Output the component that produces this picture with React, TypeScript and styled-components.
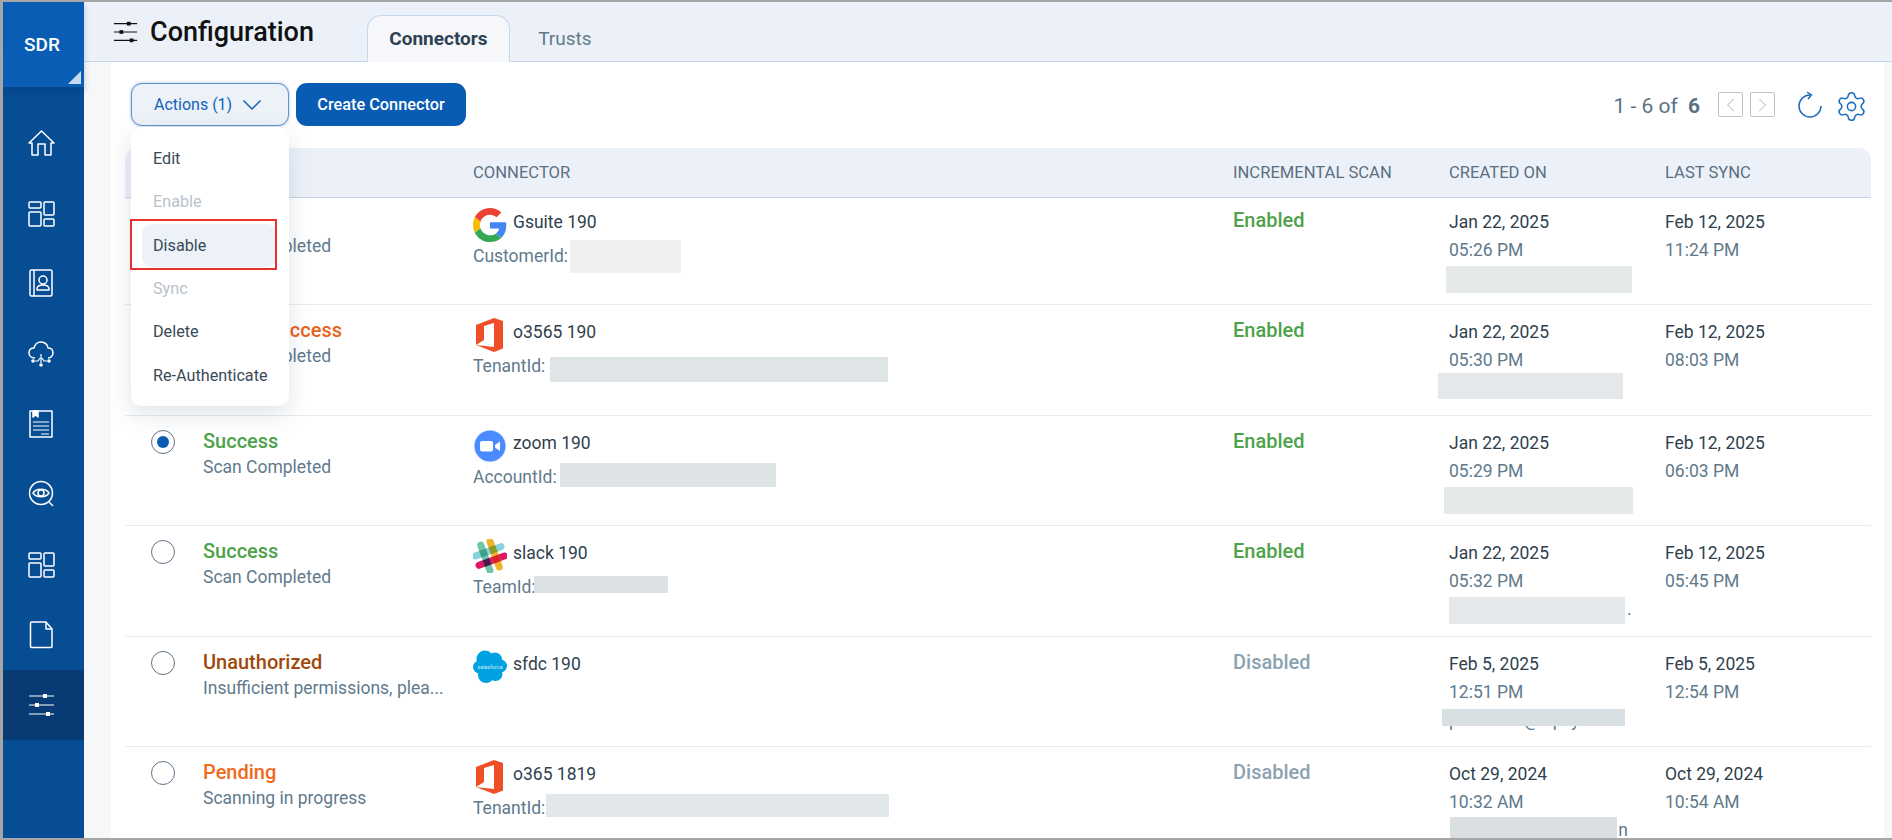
import React from 'react';
import styled, { createGlobalStyle } from 'styled-components';
import { Settings, ChevronLeft, ChevronRight } from 'lucide-react';

const Global = createGlobalStyle`
  html, body { margin: 0; padding: 0; background: #fff; }
  body { font-family: Roboto, "Liberation Sans", sans-serif; color: #2c3e50; }
  * { box-sizing: border-box; }
`;

const COLUMNS = '78px 270px 760px 216px 216px 1fr';

const Frame = styled.div`
  width: 1892px;
  height: 840px;
  display: flex;
  overflow: hidden;
  border-top: 2px solid #a6a6a6;
  border-left: 3px solid #a6a6a6;
  border-bottom: 2px solid #a6a6a6;
`;

const Sidebar = styled.nav`
  width: 81px;
  flex: none;
  background: #064d94;
  display: flex;
  flex-direction: column;
`;

const Brand = styled.div`
  height: 85px;
  flex: none;
  position: relative;
  background: linear-gradient(#085cb4, #0a5eb6);
  color: #fff;
  font-size: 19px;
  font-weight: 500;
  display: flex;
  justify-content: center;
  padding: 30px 3px 0 0;
  line-height: 26px;
  box-shadow: 0 4px 6px rgba(4, 50, 100, 0.25);

  &::after {
    content: '';
    position: absolute;
    right: 3px;
    bottom: 3px;
    border-style: solid;
    border-width: 0 0 13px 13px;
    border-color: transparent transparent #c7daee transparent;
  }
`;

const NavList = styled.div`
  padding-top: 20.5px;
  display: flex;
  flex-direction: column;
`;

const NavItem = styled.div<{ $active?: boolean }>`
  height: 70.3px;
  padding-left: 25px;
  display: flex;
  align-items: center;
  background: ${(p) => (p.$active ? '#083a74' : 'transparent')};
`;

const NavIcon = styled.svg`
  width: 28px;
  height: 28px;
  fill: none;
  stroke: #fff;
  stroke-width: 1.5;
  stroke-linejoin: round;
`;

const Content = styled.div`
  flex: 1;
  min-width: 0;
  display: flex;
  flex-direction: column;
`;

const Header = styled.header`
  height: 60px;
  flex: none;
  background: #ecf1f9;
  border-bottom: 1px solid #c5d5e8;
  display: flex;
  padding-left: 29px;
`;

const TitleGroup = styled.div`
  display: flex;
  gap: 11px;
  padding-top: 15px;
  margin-right: 53px;
`;

const TitleIcon = styled.svg`
  width: 26px;
  height: 28px;
  margin-top: 1px;
  fill: none;
  stroke: #111;
  stroke-width: 1.5;
`;

const Title = styled.h1`
  margin: 0;
  font-size: 27px;
  font-weight: 500;
  line-height: 30px;
  color: #111;
`;

const Tabs = styled.div`
  display: flex;
  align-items: flex-end;
  padding-top: 13px;
`;

const Tab = styled.div<{ $active?: boolean }>`
  height: ${(p) => (p.$active ? '47px' : '46px')};
  width: ${(p) => (p.$active ? '143px' : '110px')};
  margin-bottom: -1px;
  padding-top: 12px;
  text-align: center;
  font-size: 19px;
  line-height: 22px;
  font-weight: ${(p) => (p.$active ? 700 : 400)};
  color: ${(p) => (p.$active ? '#2f4152' : '#64798c')};
  background: ${(p) => (p.$active ? '#f5f7fb' : 'transparent')};
  border: ${(p) => (p.$active ? '1px solid #c5d9ec' : 'none')};
  border-bottom: ${(p) => (p.$active ? 'none' : '1px solid #c5d5e8')};
  border-radius: 14px 14px 0 0;
`;

const Workspace = styled.div`
  flex: 1;
  min-height: 0;
  background: #f6f7f8;
  padding: 0 8px 0 27px;
  display: flex;
`;

const Panel = styled.main`
  flex: 1;
  min-width: 0;
  background: #fff;
  padding: 21px 13px 0 14px;
`;

const Toolbar = styled.div`
  height: 43px;
  margin-bottom: 22px;
  padding: 0 6px;
  display: flex;
  align-items: center;
  justify-content: space-between;
`;

const ToolbarLeft = styled.div`
  display: flex;
  gap: 7px;
`;

const ActionsWrap = styled.div`
  position: relative;
`;

const ActionsButton = styled.button`
  width: 158px;
  height: 43px;
  padding: 0 0 0 22px;
  display: flex;
  align-items: center;
  gap: 10px;
  font: 400 16px Roboto, sans-serif;
  color: #1262b8;
  background: #edf2f9;
  border: 1px solid #5f94cc;
  border-radius: 11px;
  box-shadow: 0 0 3px rgba(30, 100, 180, 0.45);
`;

const ActionsChevron = styled.svg`
  width: 20px;
  height: 12px;
  fill: none;
  stroke: #1262b8;
  stroke-width: 1.5;
`;

const CreateButton = styled.button`
  width: 170px;
  height: 43px;
  font: 500 16.3px Roboto, sans-serif;
  color: #fff;
  background: #085cb4;
  border: none;
  border-radius: 11px;
`;

const Menu = styled.div`
  position: absolute;
  z-index: 5;
  top: 44px;
  left: 0;
  width: 158px;
  height: 279px;
  padding-top: 10px;
  background: #fff;
  border-radius: 10px;
  box-shadow: 0 8px 24px rgba(60, 80, 110, 0.16);
`;

const MenuItem = styled.div<{ $disabled?: boolean; $hover?: boolean }>`
  height: 43.3px;
  margin: 0 12px 0 11px;
  padding-left: 11px;
  display: flex;
  align-items: center;
  font-size: 16.2px;
  white-space: nowrap;
  color: ${(p) => (p.$disabled ? '#b8c2ca' : '#3a4a58')};
  background: ${(p) => (p.$hover ? '#edf2f9' : 'transparent')};
  border-radius: 10px;
`;

const Highlight = styled.div`
  position: absolute;
  top: 92px;
  left: -1px;
  width: 147px;
  height: 51px;
  border: 2px solid #e8302c;
`;

const ToolbarRight = styled.div`
  display: flex;
  align-items: center;
  margin: 3px -3px 0 0;
`;

const Count = styled.div`
  font-size: 21px;
  color: #5b7083;
  margin-right: 18px;
  white-space: nowrap;

  b {
    font-weight: 700;
    margin-left: 5px;
  }
`;

const PageButton = styled.div`
  width: 25px;
  height: 25px;
  margin: -3px 7px 0 0;
  border: 1px solid #b9c3cc;
  border-radius: 2px;
  display: flex;
  align-items: center;
  justify-content: center;
  color: #a3b0bb;
`;

const RefreshIcon = styled.svg`
  width: 26px;
  height: 28px;
  margin: -2px 12px 0 15px;
  fill: none;
  stroke: #1a6cc0;
  stroke-width: 1.5;
`;

const TableHead = styled.div`
  height: 50px;
  display: grid;
  grid-template-columns: ${COLUMNS};
  align-items: center;
  background: #ecf1f9;
  border-bottom: 1px solid #c5d4e6;
  border-radius: 12px 12px 0 0;
`;

const HeadCell = styled.div`
  font-size: 16.6px;
  color: #5b6f80;
  white-space: nowrap;
`;

const Row = styled.div<{ $first?: boolean }>`
  height: ${(p) => (p.$first ? '107px' : '110.5px')};
  padding-top: ${(p) => (p.$first ? '10px' : '13px')};
  display: grid;
  grid-template-columns: ${COLUMNS};
  align-items: start;
  border-bottom: 1px solid #e8ecef;
`;

const RadioCell = styled.div`
  padding: 1px 0 0 26px;
`;

const Radio = styled.span<{ $checked?: boolean }>`
  width: 24px;
  height: 24px;
  display: flex;
  align-items: center;
  justify-content: center;
  border: 1.5px solid #5e7388;
  border-radius: 50%;

  &::after {
    content: '';
    width: 12px;
    height: 12px;
    border-radius: 50%;
    background: ${(p) => (p.$checked ? '#0b5cb5' : 'transparent')};
  }
`;

const StatusTitle = styled.div<{ $color: string }>`
  font-size: 20px;
  font-weight: 500;
  line-height: 24px;
  color: ${(p) => p.$color};
  white-space: nowrap;
`;

const StatusText = styled.div`
  font-size: 17.5px;
  line-height: 28px;
  color: #5f7a8d;
  white-space: nowrap;
`;

const ConnectorName = styled.div`
  height: 34px;
  display: flex;
  align-items: flex-start;
  gap: 6px;
  font-size: 17.5px;
  line-height: 28px;
  color: #2f3f4e;
`;

const Logo = styled.svg`
  width: 34px;
  height: 34px;
  flex: none;
`;

const IdLine = styled.div`
  position: relative;
  height: 28px;
  font-size: 17.5px;
  line-height: 28px;
  color: #5f7a8d;
  white-space: pre;
`;

const Redact = styled.div<{ $x: number; $y: number; $w: number; $h: number; $shade: string }>`
  position: absolute;
  left: ${(p) => p.$x}px;
  top: ${(p) => p.$y}px;
  width: ${(p) => p.$w}px;
  height: ${(p) => p.$h}px;
  background: ${(p) => p.$shade};
`;

const ScanState = styled.div<{ $on: boolean }>`
  font-size: 20px;
  font-weight: 500;
  line-height: 24px;
  color: ${(p) => (p.$on ? '#4ea24a' : '#8ba2b0')};
`;

const DateText = styled.div`
  font-size: 17.5px;
  line-height: 28px;
  color: #2f3f4e;
`;

const TimeText = styled.div`
  font-size: 17.5px;
  line-height: 28px;
  color: #5f7a8d;
`;

const EmailLine = styled.div`
  position: relative;
  height: 28px;
  font-size: 17.5px;
  line-height: 28px;
  color: #5f7a8d;
  white-space: pre;
`;

type Box = { x: number; y: number; w: number; h: number; shade: string };

const SidebarGrid = () => (
  <NavIcon viewBox="0 0 28 28">
    <rect x="1" y="3" width="12" height="6" rx="1" />
    <rect x="1" y="13" width="12" height="14" rx="1" />
    <rect x="16" y="3" width="10" height="13" rx="1" />
    <rect x="16" y="20" width="10" height="7" rx="1" />
  </NavIcon>
);

const Sliders = () => (
  <>
    <path d="M1 5H26M1 14H26M1 23H26" strokeWidth="1.2" />
    <rect x="15" y="3" width="4" height="4" fill="currentColor" stroke="none" />
    <rect x="7" y="12" width="4" height="4" fill="currentColor" stroke="none" />
    <rect x="18" y="21" width="4" height="4" fill="currentColor" stroke="none" />
  </>
);

const navIcons = [
  <NavIcon viewBox="0 0 28 28" key="home">
    <path d="M1 14L13.5 2L26 14H23V26H17V15H10V26H4V14Z" />
  </NavIcon>,
  <SidebarGrid key="grid" />,
  <NavIcon viewBox="0 0 28 28" key="book">
    <rect x="2" y="1" width="22" height="26" rx="1.5" />
    <path d="M6 1V27" />
    <circle cx="15" cy="11" r="4" />
    <path d="M9 21V20C9 17 12 16 15 16S21 17 21 20V21Z" />
  </NavIcon>,
  <NavIcon viewBox="0 0 28 28" key="cloud">
    <path d="M7 18C3 18 1 15.5 1 13C1 10 3 8 6 8C7 4 10 2 13 2C17 2 20 5 20 8C23 8 25 10 25 13C25 15.5 23 18 20 18" />
    <path d="M13 14V23M7 21H10L12 18M19 21H16L14 18" strokeWidth="1.2" />
    <circle cx="13" cy="25" r="1.8" fill="#fff" stroke="none" />
    <circle cx="5" cy="21" r="1.8" fill="#fff" stroke="none" />
    <circle cx="21" cy="21" r="1.8" fill="#fff" stroke="none" />
  </NavIcon>,
  <NavIcon viewBox="0 0 28 28" key="doc">
    <rect x="2" y="1" width="22" height="26" />
    <path d="M5 1H10V7L7.5 5L5 7Z" fill="#fff" />
    <path d="M5 12H21M5 16H21M5 20H21M13 24H21" strokeWidth="1.2" />
  </NavIcon>,
  <NavIcon viewBox="0 0 28 28" key="eye">
    <circle cx="13" cy="13" r="11.5" />
    <path d="M21 22L25 26" />
    <path d="M5 13C8 8 18 8 21 13C18 18 8 18 5 13Z" />
    <circle cx="13" cy="13" r="3" />
  </NavIcon>,
  <SidebarGrid key="grid2" />,
  <NavIcon viewBox="0 0 28 28" key="file">
    <path d="M3.5 1H18L24 8V25.5A1 1 0 0 1 23 26.5H3.5A1 1 0 0 1 2.500 25.500V2A1 1 0 0 1 3.500 1Z" />
    <path d="M18 1V8H24" />
  </NavIcon>,
  <NavIcon viewBox="0 0 28 28" color="#fff" key="sliders">
    <Sliders />
  </NavIcon>,
];

const GoogleLogo = () => (
  <Logo viewBox="0 0 48 48">
    <path fill="#EA4335" d="M24 9.500c3.540 0 6.710 1.220 9.210 3.600l6.850-6.850C35.900 2.380 30.470 0 24 0 14.620 0 6.510 5.380 2.560 13.220l7.980 6.190C12.430 13.720 17.740 9.500 24 9.500z" />
    <path fill="#4285F4" d="M46.980 24.550c0-1.570-.15-3.090-.38-4.550H24v9.020h12.940c-.58 2.960-2.260 5.480-4.780 7.180l7.730 6c4.510-4.180 7.090-10.360 7.090-17.650z" />
    <path fill="#FBBC05" d="M10.530 28.590c-.48-1.450-.76-2.990-.76-4.590s.27-3.140.76-4.590l-7.980-6.190C.92 16.460 0 20.120 0 24c0 3.880.92 7.54 2.560 10.780l7.970-6.190z" />
    <path fill="#34A853" d="M24 48c6.480 0 11.930-2.130 15.890-5.810l-7.730-6c-2.150 1.450-4.920 2.300-8.160 2.300-6.260 0-11.570-4.220-13.470-9.910l-7.980 6.190C6.510 42.620 14.620 48 24 48z" />
  </Logo>
);

const OfficeLogo = () => (
  <Logo viewBox="0 0 34 34">
    <path fill="#f04e26" d="M3 7L21 0L30 3V30.500L21 34L3 27Z" />
    <path fill="#fff" d="M21 5L11 8V22L3 27L21 29Z" />
  </Logo>
);

const ZoomLogo = () => (
  <Logo viewBox="0 0 34 34">
    <circle cx="17" cy="17" r="16.500" fill="#edf2fb" />
    <circle cx="17" cy="17" r="15.500" fill="#4a8cff" />
    <rect x="7" y="12" width="13" height="10.500" rx="2" fill="#fff" />
    <path d="M22 16L27 12.500V22L22 18.500Z" fill="#fff" />
  </Logo>
);

const SlackLogo = () => (
  <Logo viewBox="0 0 34 34">
    <g transform="rotate(-20 17 17)">
      <rect x="0" y="8.500" width="34" height="7" rx="3.500" fill="#89d3df" />
      <rect x="0" y="18.500" width="34" height="7" rx="3.500" fill="#e01765" />
      <rect x="8.500" y="0" width="7" height="34" rx="3.500" fill="#70c6a8" />
      <rect x="18.500" y="0" width="7" height="34" rx="3.500" fill="#ecb32e" />
      <rect x="8.500" y="8.500" width="7" height="7" fill="#3f9e8a" />
      <rect x="18.500" y="8.500" width="7" height="7" fill="#8a9a2a" />
      <rect x="8.500" y="18.500" width="7" height="7" fill="#4d1a48" />
      <rect x="18.500" y="18.500" width="7" height="7" fill="#dd1f26" />
    </g>
  </Logo>
);

const SalesforceLogo = () => (
  <Logo viewBox="0 0 34 34">
    <g fill="#00a1e0">
      <circle cx="12" cy="9" r="8.500" />
      <circle cx="22" cy="9.500" r="7" />
      <circle cx="27.500" cy="16" r="6.500" />
      <circle cx="6.500" cy="17" r="6.500" />
      <circle cx="13" cy="25" r="8" />
      <circle cx="22.500" cy="24" r="7" />
      <rect x="8" y="9" width="18" height="14" />
    </g>
    <text x="4.500" y="18.500" fontSize="6" fill="#cfeefa" fontFamily="Roboto, sans-serif" textLength="25" lengthAdjust="spacingAndGlyphs">
      salesforce
    </text>
  </Logo>
);

type RowData = {
  checked?: boolean;
  title: string;
  color: string;
  text: string;
  logo: React.ReactNode;
  name: string;
  idLabel?: string;
  idBox?: Box;
  on: boolean;
  created: string;
  createdTime: string;
  mail?: string;
  mailBox: Box;
  synced: string;
  syncedTime: string;
};

const rows: RowData[] = [
  {
    title: 'Success',
    color: '#4ea24a',
    text: 'Scan Completed',
    logo: <GoogleLogo />,
    name: 'Gsuite 190',
    idLabel: 'CustomerId:',
    idBox: { x: 97, y: -2, w: 111, h: 33, shade: '#eef0f1' },
    on: true,
    created: 'Jan 22, 2025',
    createdTime: '05:26 PM',
    mailBox: { x: -3, y: 2, w: 186, h: 27, shade: '#e6e9ea' },
    synced: 'Feb 12, 2025',
    syncedTime: '11:24 PM',
  },
  {
    title: 'Partial Success',
    color: '#e8631c',
    text: 'Scan Completed',
    logo: <OfficeLogo />,
    name: 'o3565 190',
    idLabel: 'TenantId:',
    idBox: { x: 77, y: 5, w: 338, h: 25, shade: '#dfe4e6' },
    on: true,
    created: 'Jan 22, 2025',
    createdTime: '05:30 PM',
    mailBox: { x: -11, y: -1, w: 185, h: 26, shade: '#e4e8ea' },
    synced: 'Feb 12, 2025',
    syncedTime: '08:03 PM',
  },
  {
    checked: true,
    title: 'Success',
    color: '#4ea24a',
    text: 'Scan Completed',
    logo: <ZoomLogo />,
    name: 'zoom 190',
    idLabel: 'AccountId:   y                   y',
    idBox: { x: 87, y: 0, w: 216, h: 24, shade: '#dee3e5' },
    on: true,
    created: 'Jan 22, 2025',
    createdTime: '05:29 PM',
    mailBox: { x: -5, y: 2, w: 189, h: 27, shade: '#e6e9ea' },
    synced: 'Feb 12, 2025',
    syncedTime: '06:03 PM',
  },
  {
    title: 'Success',
    color: '#4ea24a',
    text: 'Scan Completed',
    logo: <SlackLogo />,
    name: 'slack 190',
    idLabel: 'TeamId:',
    idBox: { x: 61, y: 3, w: 134, h: 17, shade: '#dbe1e4' },
    on: true,
    created: 'Jan 22, 2025',
    createdTime: '05:32 PM',
    mail: '                                         .',
    mailBox: { x: 0, y: 2, w: 176, h: 27, shade: '#e6e9eb' },
    synced: 'Feb 12, 2025',
    syncedTime: '05:45 PM',
  },
  {
    title: 'Unauthorized',
    color: '#a0490c',
    text: 'Insufficient permissions, plea...',
    logo: <SalesforceLogo />,
    name: 'sfdc 190',
    on: false,
    created: 'Feb 5, 2025',
    createdTime: '12:51 PM',
    mail: 'p               @   p  y',
    mailBox: { x: -7, y: 3, w: 183, h: 17, shade: '#d9e0e3' },
    synced: 'Feb 5, 2025',
    syncedTime: '12:54 PM',
  },
  {
    title: 'Pending',
    color: '#ef6a1c',
    text: 'Scanning in progress',
    logo: <OfficeLogo />,
    name: 'o365 1819',
    idLabel: 'TenantId:',
    idBox: { x: 73, y: 0, w: 343, h: 23, shade: '#e2e7e9' },
    on: false,
    created: 'Oct 29, 2024',
    createdTime: '10:32 AM',
    mail: '                                       n',
    mailBox: { x: 1, y: 1, w: 167, h: 30, shade: '#dadfe2' },
    synced: 'Oct 29, 2024',
    syncedTime: '10:54 AM',
  },
];

const menuItems = [
  { label: 'Edit' },
  { label: 'Enable', disabled: true },
  { label: 'Disable', hover: true },
  { label: 'Sync', disabled: true },
  { label: 'Delete' },
  { label: 'Re-Authenticate' },
];

const masked = (b: Box) => <Redact $x={b.x} $y={b.y} $w={b.w} $h={b.h} $shade={b.shade} />;

export default function App() {
  return (
    <Frame>
      <Global />
      <Sidebar>
        <Brand>SDR</Brand>
        <NavList>
          {navIcons.map((icon, i) => (
            <NavItem key={i} $active={i === navIcons.length - 1}>
              {icon}
            </NavItem>
          ))}
        </NavList>
      </Sidebar>
      <Content>
        <Header>
          <TitleGroup>
            <TitleIcon viewBox="0 0 28 28" color="#111">
              <Sliders />
            </TitleIcon>
            <Title>Configuration</Title>
          </TitleGroup>
          <Tabs>
            <Tab $active>Connectors</Tab>
            <Tab>Trusts</Tab>
          </Tabs>
        </Header>
        <Workspace>
          <Panel>
            <Toolbar>
              <ToolbarLeft>
                <ActionsWrap>
                  <ActionsButton>
                    Actions (1)
                    <ActionsChevron viewBox="0 0 20 12">
                      <path d="M1.500 1.500L10 10L18.500 1.500" />
                    </ActionsChevron>
                  </ActionsButton>
                  <Menu>
                    {menuItems.map((m) => (
                      <MenuItem key={m.label} $disabled={m.disabled} $hover={m.hover}>
                        {m.label}
                      </MenuItem>
                    ))}
                    <Highlight />
                  </Menu>
                </ActionsWrap>
                <CreateButton>Create Connector</CreateButton>
              </ToolbarLeft>
              <ToolbarRight>
                <Count>
                  1 - 6 of <b>6</b>
                </Count>
                <PageButton>
                  <ChevronLeft size={24} strokeWidth={1} />
                </PageButton>
                <PageButton>
                  <ChevronRight size={24} strokeWidth={1} />
                </PageButton>
                <RefreshIcon viewBox="0 0 26 28">
                  <path d="M24 15A11 11 0 1 1 13 4" />
                  <path d="M10 1L14.500 4L11 8" />
                </RefreshIcon>
                <Settings size={33} strokeWidth={1.1} color="#1a6cc0" />
              </ToolbarRight>
            </Toolbar>
            <TableHead>
              <div />
              <HeadCell>STATUS</HeadCell>
              <HeadCell>CONNECTOR</HeadCell>
              <HeadCell>INCREMENTAL SCAN</HeadCell>
              <HeadCell>CREATED ON</HeadCell>
              <HeadCell>LAST SYNC</HeadCell>
            </TableHead>
            {rows.map((r, i) => (
              <Row key={r.name} $first={i === 0}>
                <RadioCell>
                  <Radio $checked={r.checked} />
                </RadioCell>
                <div>
                  <StatusTitle $color={r.color}>{r.title}</StatusTitle>
                  <StatusText>{r.text}</StatusText>
                </div>
                <div>
                  <ConnectorName>
                    {r.logo}
                    {r.name}
                  </ConnectorName>
                  {r.idLabel && (
                    <IdLine>
                      {r.idLabel}
                      {r.idBox && masked(r.idBox)}
                    </IdLine>
                  )}
                </div>
                <ScanState $on={r.on}>{r.on ? 'Enabled' : 'Disabled'}</ScanState>
                <div>
                  <DateText>{r.created}</DateText>
                  <TimeText>{r.createdTime}</TimeText>
                  <EmailLine>
                    {r.mail}
                    {masked(r.mailBox)}
                  </EmailLine>
                </div>
                <div>
                  <DateText>{r.synced}</DateText>
                  <TimeText>{r.syncedTime}</TimeText>
                </div>
              </Row>
            ))}
          </Panel>
        </Workspace>
      </Content>
    </Frame>
  );
}
